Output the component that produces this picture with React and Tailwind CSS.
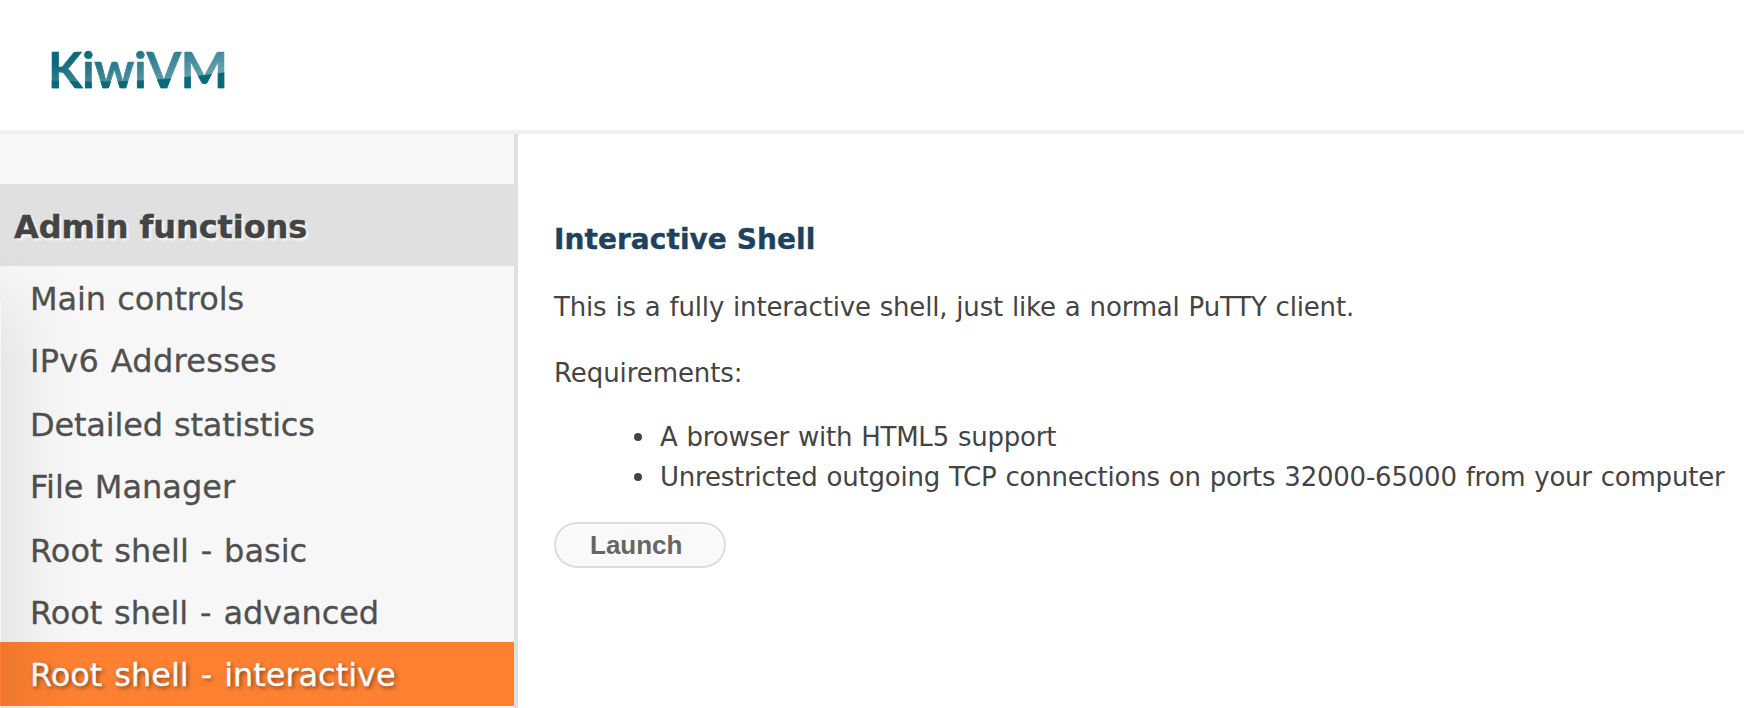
const items = [
  { label: 'Main controls', cls: 'h-[64px] pt-[2px] tracking-[-0.09px] [word-spacing:1.1px]' },
  { label: 'IPv6 Addresses', cls: 'h-[62px] tracking-[0.28px] [word-spacing:1.1px]' },
  { label: 'Detailed statistics', cls: 'h-[64px] pt-[2px] tracking-[-0.18px] [word-spacing:1.1px]' },
  { label: 'File Manager', cls: 'h-[62px] [word-spacing:1.1px]' },
  { label: 'Root shell - basic', cls: 'h-[64px] pt-[2px] [word-spacing:1.7px]' },
  { label: 'Root shell - advanced', cls: 'h-[60px] pt-[2px] tracking-[-0.1px] [word-spacing:1.9px]' },
];

function Bullet({ children }) {
  return (
    <li className="flex items-center">
      <span className="mr-[18px] size-[8px] rounded-full bg-[#444]" />
      <span>{children}</span>
    </li>
  );
}

function Logo() {
  return (
    <span className="whitespace-nowrap bg-[radial-gradient(circle_at_47px_-873px,transparent_919px,#0c687b_920px),linear-gradient(165deg,#0c687b_25%,#6ba7b4_75%)] bg-clip-text font-['Lato',sans-serif] text-[50px] leading-[68px] font-bold tracking-[-0.35px] text-transparent [-webkit-text-stroke:0.6px_transparent]">
      KiwiVM
    </span>
  );
}

export default function App() {
  return (
    <div className="flex h-[708px] w-[1744px] flex-col overflow-hidden bg-white font-['DejaVu_Sans',sans-serif] text-[#444]">
      <header className="flex h-[134px] shrink-0 items-start border-b-4 border-[#f0f0f0] pt-[35px] pl-[48px]">
        <Logo />
      </header>
      <div className="flex grow">
        <nav className="relative w-[518px] shrink-0 overflow-hidden border-r-4 border-[#e0e0e0] bg-[#f7f7f7] pt-[50px] text-[32px] whitespace-nowrap">
          <h2 className="flex h-[82px] items-center bg-[#e0e0e0] pt-[3px] pl-[14px] font-bold tracking-[-0.08px] [-webkit-text-stroke:0.4px_#444] [text-shadow:2px_2px_3px_#fff]">
            <span>Admin functions</span>
          </h2>
          <ul className="text-[#505050] [-webkit-text-stroke:0.3px_currentColor]">
            {items.map((item) => (
              <li key={item.label} className={'flex items-center pl-[30px] ' + item.cls}>
                <span>{item.label}</span>
              </li>
            ))}
            <li className="flex h-[64px] items-center bg-[#ff8031] pt-[1px] pl-[30px] tracking-[-0.04px] text-white [-webkit-text-stroke:0.3px_#fff] [text-shadow:2px_2px_4px_rgba(0,0,0,0.5)] [word-spacing:1.9px]">
              <span>Root shell - interactive</span>
            </li>
          </ul>
          <div className="pointer-events-none absolute top-[166px] -left-[40px] h-[900px] w-[41px] shadow-[0_0_80px_rgba(0,0,0,0.18)]" />
        </nav>
        <main className="flex flex-col items-start pt-[86px] pl-[36px] text-[26px] leading-[40px] whitespace-nowrap">
          <h1 className="text-[28px] font-bold tracking-[0.06px] text-[#1e425e] [-webkit-text-stroke:0.4px_#1e425e]">Interactive Shell</h1>
          <p className="mt-[27px] tracking-[-0.18px] [word-spacing:0.9px]">This is a fully interactive shell, just like a normal PuTTY client.</p>
          <p className="mt-[26px] tracking-[-0.08px]">Requirements:</p>
          <ul className="mt-[24px] pl-[80px] tracking-[-0.22px] [word-spacing:0.9px]">
            <Bullet>A browser with HTML5 support</Bullet>
            <Bullet>Unrestricted outgoing TCP connections on ports 32000-65000 from your computer</Bullet>
          </ul>
          <button className="mt-[25px] flex h-[46px] w-[172px] items-center rounded-full border-2 border-[#ddd] bg-[#f9f9f9] pl-[34px] font-['Liberation_Sans',sans-serif] font-bold text-[#666] shadow-[inset_0_2px_0_#fff] [text-shadow:0_2px_0_#fff]">
            Launch
          </button>
        </main>
      </div>
    </div>
  );
}
